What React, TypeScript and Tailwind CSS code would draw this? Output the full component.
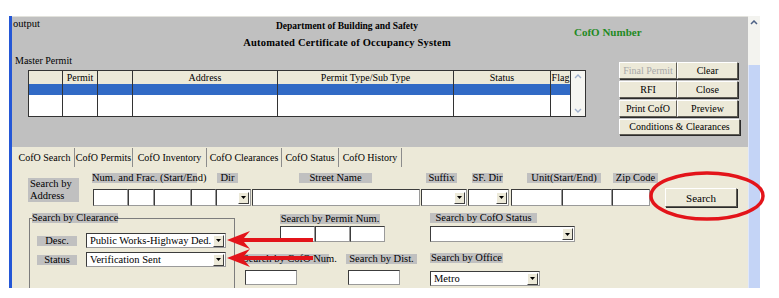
import React from "react"

type P = { className?: string; children?: React.ReactNode }

function Lbl({ className = "", children }: P) {
  return (
    <div className={`h-[10px] whitespace-nowrap bg-[#c0c0c0] text-center text-[10.5px] leading-[10px] ${className}`}>
      {children}
    </div>
  )
}

function Box({ className = "", children }: P) {
  return (
    <div
      className={`overflow-hidden whitespace-nowrap border border-b-[#9a9a9a] border-l-[#3c3c3c] border-r-[#9a9a9a] border-t-[#3c3c3c] bg-white pl-[3px] text-[10.5px] leading-[13px] ${className}`}
    >
      {children}
    </div>
  )
}

function Arrow() {
  return (
    <div className="flex h-[12px] w-[11px] shrink-0 items-center justify-center border border-b-[#404040] border-l-white border-r-[#404040] border-t-white bg-[#ece9d8]">
      <svg width="5" height="3" viewBox="0 0 5 3">
        <polygon points="0,0 5,0 2.5,3" fill="#000" />
      </svg>
    </div>
  )
}

function Select({ className = "", children }: P) {
  return (
    <div
      className={`flex items-center justify-between border border-b-[#9a9a9a] border-l-[#3c3c3c] border-r-[#9a9a9a] border-t-[#3c3c3c] bg-white pl-[3px] pr-px text-[10.5px] leading-[13px] ${className}`}
    >
      <span className="whitespace-nowrap">{children}</span>
      <Arrow />
    </div>
  )
}

function Btn({ className = "", children }: P) {
  return (
    <div
      className={`flex items-center justify-center whitespace-nowrap border border-b-[#5e5c54] border-l-white border-r-[#5e5c54] border-t-white bg-[#ece9d8] text-[10px] leading-[12px] shadow-[1px_1px_0_#2b2b2b] ${className}`}
    >
      {children}
    </div>
  )
}

const columns = [
  { w: "w-[34px]", label: "" },
  { w: "w-[35px]", label: "Permit" },
  { w: "w-[35px]", label: "" },
  { w: "w-[145px]", label: "Address" },
  { w: "w-[176px]", label: "Permit Type/Sub Type" },
  { w: "w-[97px]", label: "Status" },
  { w: "w-[20px]", label: "Flag" },
]

const tabs = [
  { w: "w-[60px]", label: "CofO Search" },
  { w: "w-[58px]", label: "CofO Permits" },
  { w: "w-[74px]", label: "CofO Inventory" },
  { w: "w-[75px]", label: "CofO Clearances" },
  { w: "w-[57px]", label: "CofO Status" },
  { w: "w-[63px]", label: "CofO History" },
]

function Chevron({ up }: { up?: boolean }) {
  return (
    <svg width="8" height="5" viewBox="0 0 8 5">
      <polyline
        points={up ? "1,4 4,1 7,4" : "1,1 4,4 7,1"}
        fill="none"
        stroke="#9fb0cc"
        strokeWidth="1.4"
      />
    </svg>
  )
}

export default function App() {
  return (
    <div className="relative h-[298px] w-[779px] overflow-hidden bg-white font-[family-name:Liberation_Serif,serif] text-black">
      <div className="ml-[9px] mt-[16px] flex h-[272px] w-[751px]">
        <div className="w-[3px] bg-[#2457d6]" />

        <div className="flex w-[736px] flex-col">
          {/* gray header area */}
          <div className="h-[131px] shrink-0 border-t border-[#e2e2dc] bg-[#c0c0c0]">
            <div className="flex h-[38px] items-start">
              <div className="w-[135px] pl-[1px] pt-[1px] text-[10.5px] leading-[12px]">output</div>
              <div className="flex w-[400px] flex-col items-center">
                <div className="mt-[3px] text-[9.5px] font-bold leading-[12px]">Department of Building and Safety</div>
                <div className="mt-[4px] text-[10.5px] font-bold leading-[14px] tracking-[0.2px]">
                  Automated Certificate of Occupancy System
                </div>
              </div>
              <div className="ml-[27px] mt-[8px] text-[11px] font-bold leading-[14px] text-[#1f8a1f]">CofO Number</div>
            </div>

            <div className="flex">
              <div className="flex w-[574px] flex-col">
                <div className="pl-[3px] text-[10px] leading-[12px]">Master Permit</div>
                <div className="ml-[16px] mt-[3px] flex h-[47px] w-[558px] border border-[#333]">
                  {columns.map((c, i) => (
                    <div key={i} className={`flex flex-col border-r border-[#333] ${c.w}`}>
                      <div className="h-[13px] overflow-hidden whitespace-nowrap bg-[#ece9d8] text-center text-[10px] leading-[13px]">
                        {c.label}
                      </div>
                      <div className="h-[11px] bg-[#316ac5]" />
                      <div className="flex-1 bg-white" />
                    </div>
                  ))}
                  <div className="flex flex-1 flex-col items-center justify-between bg-[#f6f6f2] py-[3px]">
                    <Chevron up />
                    <Chevron />
                  </div>
                </div>
              </div>

              <div className="ml-[33px] mt-[7px] grid grid-cols-[58px_61px] gap-y-[2px]">
                <Btn className="h-[17px] text-[#a8a8a8]">Final Permit</Btn>
                <Btn className="h-[17px]">Clear</Btn>
                <Btn className="h-[17px]">RFI</Btn>
                <Btn className="h-[17px]">Close</Btn>
                <Btn className="h-[17px]">Print CofO</Btn>
                <Btn className="h-[17px]">Preview</Btn>
                <Btn className="col-span-2 h-[16px] w-[121px]">Conditions &amp; Clearances</Btn>
              </div>
            </div>
          </div>

          {/* beige tab area */}
          <div className="flex-1 overflow-hidden bg-[#ece9d8]">
            <div className="flex h-[20px] pl-[3px] pt-px">
              {tabs.map((t) => (
                <div
                  key={t.label}
                  className={`flex h-[19px] items-center justify-center whitespace-nowrap border-r border-[#8c8c8c] text-[10px] leading-[12px] ${t.w}`}
                >
                  {t.label}
                </div>
              ))}
            </div>

            {/* search by address */}
            <div className="mt-[6px] flex items-start">
              <div className="ml-[16px] mt-[5px] h-[24px] w-[51px] bg-[#c0c0c0] pl-[2px] text-[10.5px] leading-[12px]">
                Search by
                <br />
                Address
              </div>
              <div className="ml-[13px] flex flex-col">
                <div className="flex">
                  <Lbl className="w-[105px]">Num. and Frac. (Start/End)</Lbl>
                  <Lbl className="ml-[20px] w-[21px]">Dir</Lbl>
                  <Lbl className="ml-[61px] w-[73px]">Street Name</Lbl>
                  <Lbl className="ml-[54px] w-[31px]">Suffix</Lbl>
                  <Lbl className="ml-[15px] w-[31px]">SF. Dir</Lbl>
                  <Lbl className="ml-[24px] w-[74px]">Unit(Start/End)</Lbl>
                  <Lbl className="ml-[12px] w-[45px]">Zip Code</Lbl>
                </div>
                <div className="ml-px mt-[5px] flex items-center">
                  <Box className="h-[17px] w-[35px]" />
                  <Box className="h-[17px] w-[26px]" />
                  <Box className="h-[17px] w-[37px]" />
                  <Box className="h-[17px] w-[25px]" />
                  <Select className="h-[17px] w-[35px]" />
                  <Box className="ml-px h-[17px] w-[168px]" />
                  <Select className="ml-px h-[17px] w-[46px]" />
                  <Select className="ml-px h-[17px] w-[41px]" />
                  <Box className="ml-[2px] h-[17px] w-[51px]" />
                  <Box className="h-[17px] w-[50px]" />
                  <Box className="h-[17px] w-[38px]" />
                  <Btn className="ml-[15px] h-[19px] w-[72px] text-[11px]">Search</Btn>
                </div>
              </div>
            </div>

            {/* lower criteria */}
            <div className="mt-[6px] flex items-start">
              <fieldset className="ml-[17px] h-[90px] w-[206px] shrink-0 border border-[#7d7d7d]">
                <legend className="ml-[2px] bg-[#c0c0c0] text-[10.5px] leading-[10px]">Search by Clearance</legend>
                <div className="mt-[10px] flex items-center">
                  <Lbl className="ml-[7px] w-[40px]">Desc.</Lbl>
                  <Select className="ml-[9px] h-[15px] w-[140px]">Public Works-Highway Ded.</Select>
                </div>
                <div className="mt-[4px] flex items-center">
                  <Lbl className="ml-[7px] w-[40px]">Status</Lbl>
                  <Select className="ml-[9px] h-[15px] w-[140px]">Verification Sent</Select>
                </div>
              </fieldset>

              <div className="ml-[8px] flex w-[174px] shrink-0 flex-col">
                <Lbl className="ml-[37px] mt-px w-[100px]">Search by Permit Num.</Lbl>
                <div className="ml-[37px] mt-[2px] flex">
                  <Box className="h-[16px] w-[35px]" />
                  <Box className="h-[16px] w-[35px]" />
                  <Box className="h-[16px] w-[35px]" />
                </div>
                <div className="mt-[12px] flex">
                  <div className="flex flex-col">
                    <Lbl className="w-[86px]">Search by CofO Num.</Lbl>
                    <Box className="ml-[2px] mt-[6px] h-[15px] w-[52px]" />
                  </div>
                  <div className="ml-[17px] flex flex-col">
                    <Lbl className="w-[71px]">Search by Dist.</Lbl>
                    <Box className="ml-[2px] mt-[6px] h-[15px] w-[52px]" />
                  </div>
                </div>
              </div>

              <div className="ml-[13px] flex flex-col">
                <Lbl className="w-[107px]">Search by CofO Status</Lbl>
                <Select className="mt-[3px] h-[16px] w-[145px]" />
                <Lbl className="mt-[11px] w-[73px]">Search by Office</Lbl>
                <Select className="mt-[8px] h-[15px] w-[110px]">Metro</Select>
              </div>
            </div>
          </div>
        </div>

        {/* window scrollbar */}
        <div className="flex w-[12px] flex-col">
          <div className="flex h-[49px] justify-center bg-[#f3f3ef] pt-[4px]">
            <svg width="8" height="5" viewBox="0 0 8 5">
              <polyline points="1,4 4,1 7,4" fill="none" stroke="#4d6185" strokeWidth="1.5" />
            </svg>
          </div>
          <div className="flex-1 border-l border-[#dfe7fa] bg-[#c4d4f6]" />
        </div>
      </div>

      {/* red annotations */}
      <svg className="pointer-events-none absolute inset-0" width="779" height="298" viewBox="0 0 779 298">
        <ellipse cx="707" cy="196" rx="56" ry="23" fill="none" stroke="#e3141a" strokeWidth="3.5" />
        <polygon points="227,240 250,231 244,238 313,238 313,242 244,242 250,249" fill="#e3141a" />
        <polygon points="227,258 250,249 244,256 313,256 313,260 244,260 250,267" fill="#e3141a" />
      </svg>
    </div>
  )
}
